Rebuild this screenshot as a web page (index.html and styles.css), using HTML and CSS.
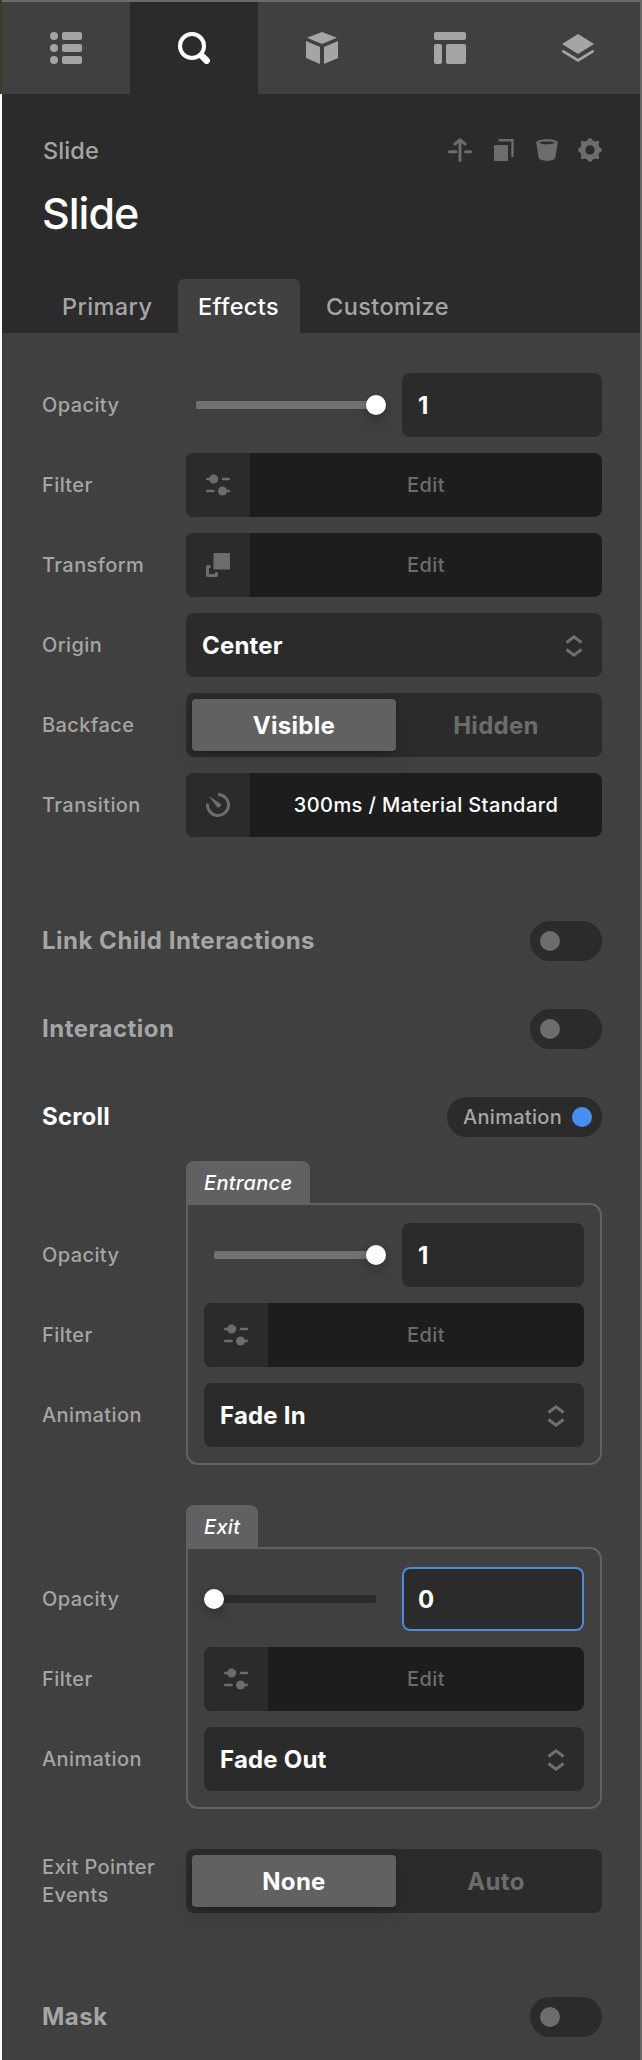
FILE: index.html
```html
<!DOCTYPE html>
<html lang="en">
<head>
<meta charset="utf-8">
<title>Slide inspector</title>
<link rel="stylesheet" href="styles.css">
</head>
<body>
<svg class="defs" width="0" height="0" aria-hidden="true">
  <symbol id="sliders" viewBox="0 0 24 24"><path d="M1.2 6H7M17 6H22.8M1.2 18H7.5M17 18H22.8" fill="none" stroke="currentColor" stroke-width="2.6" stroke-linecap="round"/><circle cx="7.7" cy="6" r="4.5" fill="currentColor"/><circle cx="16.5" cy="18" r="4.5" fill="currentColor"/></symbol>
  <symbol id="updown" viewBox="0 0 24 24"><path d="M4.5 8.5L12 2.8L19.5 8.5M4.5 15.5L12 21.2L19.5 15.5" fill="none" stroke="currentColor" stroke-width="3"/></symbol>
</svg>
<div class="panel">
  <nav class="modes">
    <div class="mode"><svg width="32" height="32" viewBox="0 0 32 32" fill="currentColor"><circle cx="4" cy="4" r="4"/><circle cx="4" cy="16" r="4"/><circle cx="4" cy="28" r="4"/><rect x="12" width="20" height="8" rx="2"/><rect x="12" y="12" width="20" height="8" rx="2"/><rect x="12" y="24" width="20" height="8" rx="2"/></svg></div>
    <div class="mode active"><svg width="32" height="32" viewBox="0 0 32 32" fill="none" stroke="currentColor"><circle cx="14" cy="14" r="12" stroke-width="4"/><path d="M23.5 23.5L28.6 28.6" stroke-width="6.6" stroke-linecap="round"/></svg></div>
    <div class="mode"><svg width="32" height="32" viewBox="0 0 32 32" fill="currentColor"><path d="M16 0L31 5.8L16 12L1 5.8ZM0 9L14 15V32L0 26ZM32 9L18 15V32L32 26Z"/></svg></div>
    <div class="mode"><svg width="32" height="32" viewBox="0 0 32 32" fill="currentColor"><rect width="32" height="8" rx="2"/><rect y="12" width="8" height="20" rx="2"/><rect x="12" y="12" width="20" height="20" rx="2"/></svg></div>
    <div class="mode"><svg width="32" height="32" viewBox="0 0 32 32" fill="currentColor"><path d="M16 2L32 12L16 22L0 12Z"/><path d="M1.3 19.4L16 28.4L30.7 19.4" fill="none" stroke="currentColor" stroke-width="2.8" stroke-linecap="round"/></svg></div>
  </nav>

  <header class="head">
    <div class="crumb">
      <span class="crumb-name">Slide</span>
      <div class="actions">
        <svg width="24" height="24" viewBox="0 0 24 24" fill="none" stroke="currentColor" stroke-width="3" stroke-linecap="round"><path d="M12 2V22.5M1.5 13.7H8M17.5 13.7H22.5"/><path d="M7 6L12 1.8L17 6" stroke-linejoin="round"/></svg>
        <svg width="24" height="24" viewBox="0 0 24 24"><rect x="3" y="7" width="14" height="16" rx="1" fill="currentColor"/><path d="M7.5 2.2H21.5V18.7" fill="none" stroke="currentColor" stroke-width="2.4"/></svg>
        <svg width="24" height="24" viewBox="0 0 24 24"><path fill="currentColor" fill-rule="evenodd" d="M1.2 4.6C1.2 2.5 6 1.2 12 1.2S22.8 2.5 22.8 4.6L20.4 19.6C19.9 21.9 16.4 22.9 12 22.9S4.1 21.9 3.6 19.6ZM4 4.7C5 5.6 8.2 6.2 12 6.2S19 5.6 20 4.7C18.8 4 15.8 3.6 12 3.6S5.2 4 4 4.7Z"/></svg>
        <svg width="24" height="24" viewBox="0 0 24 24" fill="currentColor"><path fill-rule="evenodd" d="M10.8 .3H13.2L14.8 2.6L17.3 3.4L20 2.7L21.3 4L20.6 6.7L21.4 9.2L23.7 10.8V13.2L21.4 14.8L20.6 17.3L21.3 20L20 21.3L17.3 20.6L14.8 21.4L13.2 23.7H10.8L9.2 21.4L6.7 20.6L4 21.3L2.7 20L3.4 17.3L2.6 14.8L.3 13.2V10.8L2.6 9.2L3.4 6.7L2.7 4L4 2.7L6.7 3.4L9.2 2.6ZM12 7.3A4.7 4.7 0 1 0 12 16.7A4.7 4.7 0 1 0 12 7.3Z"/></svg>
      </div>
    </div>
    <h1 class="title">Slide</h1>
    <div class="tabs">
      <span class="tab primary">Primary</span>
      <span class="tab effects">Effects</span>
      <span class="tab customize">Customize</span>
    </div>
  </header>

  <main class="body">
    <section class="rows">
      <div class="row"><span class="label">Opacity</span><div class="control opacity"><div class="slider full"><i class="knob"></i></div><div class="field">1</div></div></div>
      <div class="row"><span class="label">Filter</span><div class="control editor"><div class="cap"><svg width="24" height="24"><use href="#sliders"/></svg></div><div class="value">Edit</div></div></div>
      <div class="row"><span class="label">Transform</span><div class="control editor"><div class="cap"><svg width="24" height="24" viewBox="0 0 24 24"><rect x="7.5" width="16.5" height="16.5" rx="1" fill="currentColor"/><path d="M4.5 13.5H1.5V22.5H10.5V19.2" fill="none" stroke="currentColor" stroke-width="3" stroke-linejoin="round"/></svg></div><div class="value">Edit</div></div></div>
      <div class="row"><span class="label">Origin</span><div class="control field select">Center<svg width="24" height="24"><use href="#updown"/></svg></div></div>
      <div class="row"><span class="label">Backface</span><div class="control segmented"><span class="seg on">Visible</span><span class="seg">Hidden</span></div></div>
      <div class="row"><span class="label">Transition</span><div class="control editor"><div class="cap"><svg width="24" height="24" viewBox="0 0 24 24"><path d="M12 1.5A10.5 10.5 0 1 1 1.6 10.5" fill="none" stroke="currentColor" stroke-width="3"/><path d="M2.8 3L14.4 10.6C15.8 12.4 13.8 15.4 11.2 14.2Z" fill="currentColor"/></svg></div><div class="value set">300ms / Material Standard</div></div></div>
    </section>

    <section class="toggles">
      <div class="toggle-row"><span class="heading">Link Child Interactions</span><span class="switch"><i></i></span></div>
      <div class="toggle-row"><span class="heading">Interaction</span><span class="switch"><i></i></span></div>
      <div class="toggle-row"><span class="heading lit">Scroll</span><span class="switch on">Animation<i></i></span></div>
    </section>

    <section class="group">
      <div class="group-labels"><span class="label">Opacity</span><span class="label">Filter</span><span class="label">Animation</span></div>
      <div class="group-main">
        <div class="group-tab">Entrance</div>
        <div class="group-box">
          <div class="control opacity"><div class="slider full"><i class="knob"></i></div><div class="field">1</div></div>
          <div class="control editor"><div class="cap"><svg width="24" height="24"><use href="#sliders"/></svg></div><div class="value">Edit</div></div>
          <div class="control field select">Fade In<svg width="24" height="24"><use href="#updown"/></svg></div>
        </div>
      </div>
    </section>

    <section class="group">
      <div class="group-labels"><span class="label">Opacity</span><span class="label">Filter</span><span class="label">Animation</span></div>
      <div class="group-main">
        <div class="group-tab">Exit</div>
        <div class="group-box">
          <div class="control opacity"><div class="slider empty"><i class="knob"></i></div><div class="field focused">0</div></div>
          <div class="control editor"><div class="cap"><svg width="24" height="24"><use href="#sliders"/></svg></div><div class="value">Edit</div></div>
          <div class="control field select">Fade Out<svg width="24" height="24"><use href="#updown"/></svg></div>
        </div>
      </div>
    </section>

    <div class="row pointer"><span class="label">Exit Pointer Events</span><div class="control segmented"><span class="seg on">None</span><span class="seg">Auto</span></div></div>

    <div class="toggle-row mask"><span class="heading">Mask</span><span class="switch"><i></i></span></div>
  </main>
</div>
</body>
</html>
```
FILE: styles.css
```css
* { box-sizing: border-box; }
body {
  margin: 0;
  width: 642px;
  height: 2060px;
  overflow: hidden;
  background: linear-gradient(#3e3929 94px, #fff 94px);
  font-family: Inter, "Liberation Sans", sans-serif;
  font-size: 20px;
  font-weight: 450;
  color: #a5a5a5;
}
svg { display: block; flex: none; }
.defs { position: absolute; }
.panel {
  margin-left: 2px;
  height: 2060px;
  border-top: 2px solid #6a6a6a;
  border-right: 2px solid #666;
  background: #404040;
}

.modes { display: flex; height: 92px; overflow: hidden; }
.mode { flex: 0 0 128px; display: flex; align-items: center; justify-content: center; }
.mode.active { background: #2b2b2b; color: #fff; }

.head { height: 239px; padding: 38px 38px 0 40px; background: #2b2b2b; }
.crumb { display: flex; justify-content: space-between; align-items: center; height: 36px; }
.crumb-name { padding-left: 1px; font-size: 23.5px; letter-spacing: 0.1px; }
.actions { display: flex; gap: 19.33px; color: #6c6c6c; }
.title { margin: 19px 0 0; height: 52px; line-height: 52px; font-size: 43px; font-weight: 500; letter-spacing: -1px; color: #fff; }
.tabs { display: flex; margin-top: 40px; }
.tab { height: 54px; line-height: 56px; padding: 0 20px; font-size: 23.5px; letter-spacing: 0.4px; white-space: nowrap; }
.tab.primary { width: 136px; }
.tab.effects { width: 122px; background: #404040; color: #fff; font-weight: 500; border-radius: 6px 6px 0 0; }
.tab.customize { padding-left: 26px; }

.body { padding: 40px 38px 0 38px; }
.rows { display: flex; flex-direction: column; gap: 16px; }
.row { display: flex; align-items: center; justify-content: space-between; }
.label { width: 130px; padding-left: 2px; line-height: 28px; letter-spacing: 0.4px; }
.control { width: 416px; height: 64px; }
.opacity { display: flex; align-items: center; gap: 26px; padding-left: 10px; }
.slider { flex: 1; position: relative; height: 8px; border-radius: 2px; background: #717171; }
.slider.empty { background: #2b2b2b; }
.knob {
  position: absolute;
  top: -6px;
  width: 20px;
  height: 20px;
  border-radius: 50%;
  background: #fff;
  box-shadow: 0 3px 8px rgba(0, 0, 0, .2), 0 8px 16px rgba(0, 0, 0, .1);
}
.full .knob { right: -10px; }
.empty .knob { left: -10px; }
.field {
  display: flex;
  align-items: center;
  width: 200px;
  height: 64px;
  padding: 1px 16px 0;
  border-radius: 8px;
  background: #2b2b2b;
  font-size: 24px;
  font-weight: 700;
  letter-spacing: 0.2px;
  color: #fff;
}
.field.focused { box-shadow: inset 0 0 0 2px #4a8ce0; }
.field.select { width: 416px; justify-content: space-between; }
.select svg { color: #6f6f6f; }
.editor { display: flex; border-radius: 8px; overflow: hidden; background: #1d1d1d; }
.cap { flex: 0 0 64px; display: flex; align-items: center; justify-content: center; background: #2b2b2b; color: #6c6c6c; }
.value { flex: 1; display: flex; align-items: center; justify-content: center; letter-spacing: 0.4px; color: #6c6c6c; }
.value.set { color: #fff; }
.segmented { display: flex; padding: 6px; border-radius: 8px; background: #2b2b2b; }
.seg { flex: 1; display: flex; align-items: center; justify-content: center; padding-top: 1px; font-size: 24px; font-weight: 650; letter-spacing: 0.3px; color: #6c6c6c; }
.seg.on { flex: 0 0 204px; background: #616161; color: #fff; border-radius: 4px; box-shadow: 0 2px 4px rgba(0, 0, 0, .18), 0 8px 20px rgba(0, 0, 0, .1); }

.toggles { display: flex; flex-direction: column; gap: 48px; margin-top: 84px; }
.toggle-row { display: flex; align-items: center; justify-content: space-between; height: 40px; }
.heading { padding: 0 0 1px 2px; font-size: 24px; font-weight: 650; letter-spacing: 0.5px; }
.heading.lit { color: #fff; font-weight: 700; letter-spacing: 0.2px; }
.switch { display: flex; align-items: center; width: 72px; height: 40px; padding: 0 10px; border-radius: 20px; background: #2b2b2b; letter-spacing: 0.3px; }
.switch i { width: 20px; height: 20px; border-radius: 50%; background: #6c6c6c; }
.switch.on { width: 155px; padding-left: 16px; justify-content: space-between; }
.switch.on i { background: #458ff0; }

.group { display: flex; justify-content: space-between; margin-top: 24px; }
.group + .group { margin-top: 40px; }
.group-labels { display: flex; flex-direction: column; gap: 52px; padding-top: 80px; }
.group-main { width: 416px; display: flex; flex-direction: column; align-items: flex-start; }
.group-tab { height: 42px; line-height: 44px; padding: 0 18px; border-radius: 8px 8px 0 0; background: #616161; color: #fff; font-style: italic; font-weight: 500; letter-spacing: 0.3px; }
.group-box { width: 416px; display: flex; flex-direction: column; gap: 16px; padding: 18px 16px 16px; border: 2px solid #616161; border-radius: 0 12px 12px 12px; }
.group-box .control { width: 380px; }
.group-box .opacity .field { width: 182px; }

.pointer { margin-top: 40px; }
.mask { margin-top: 84px; }
```
